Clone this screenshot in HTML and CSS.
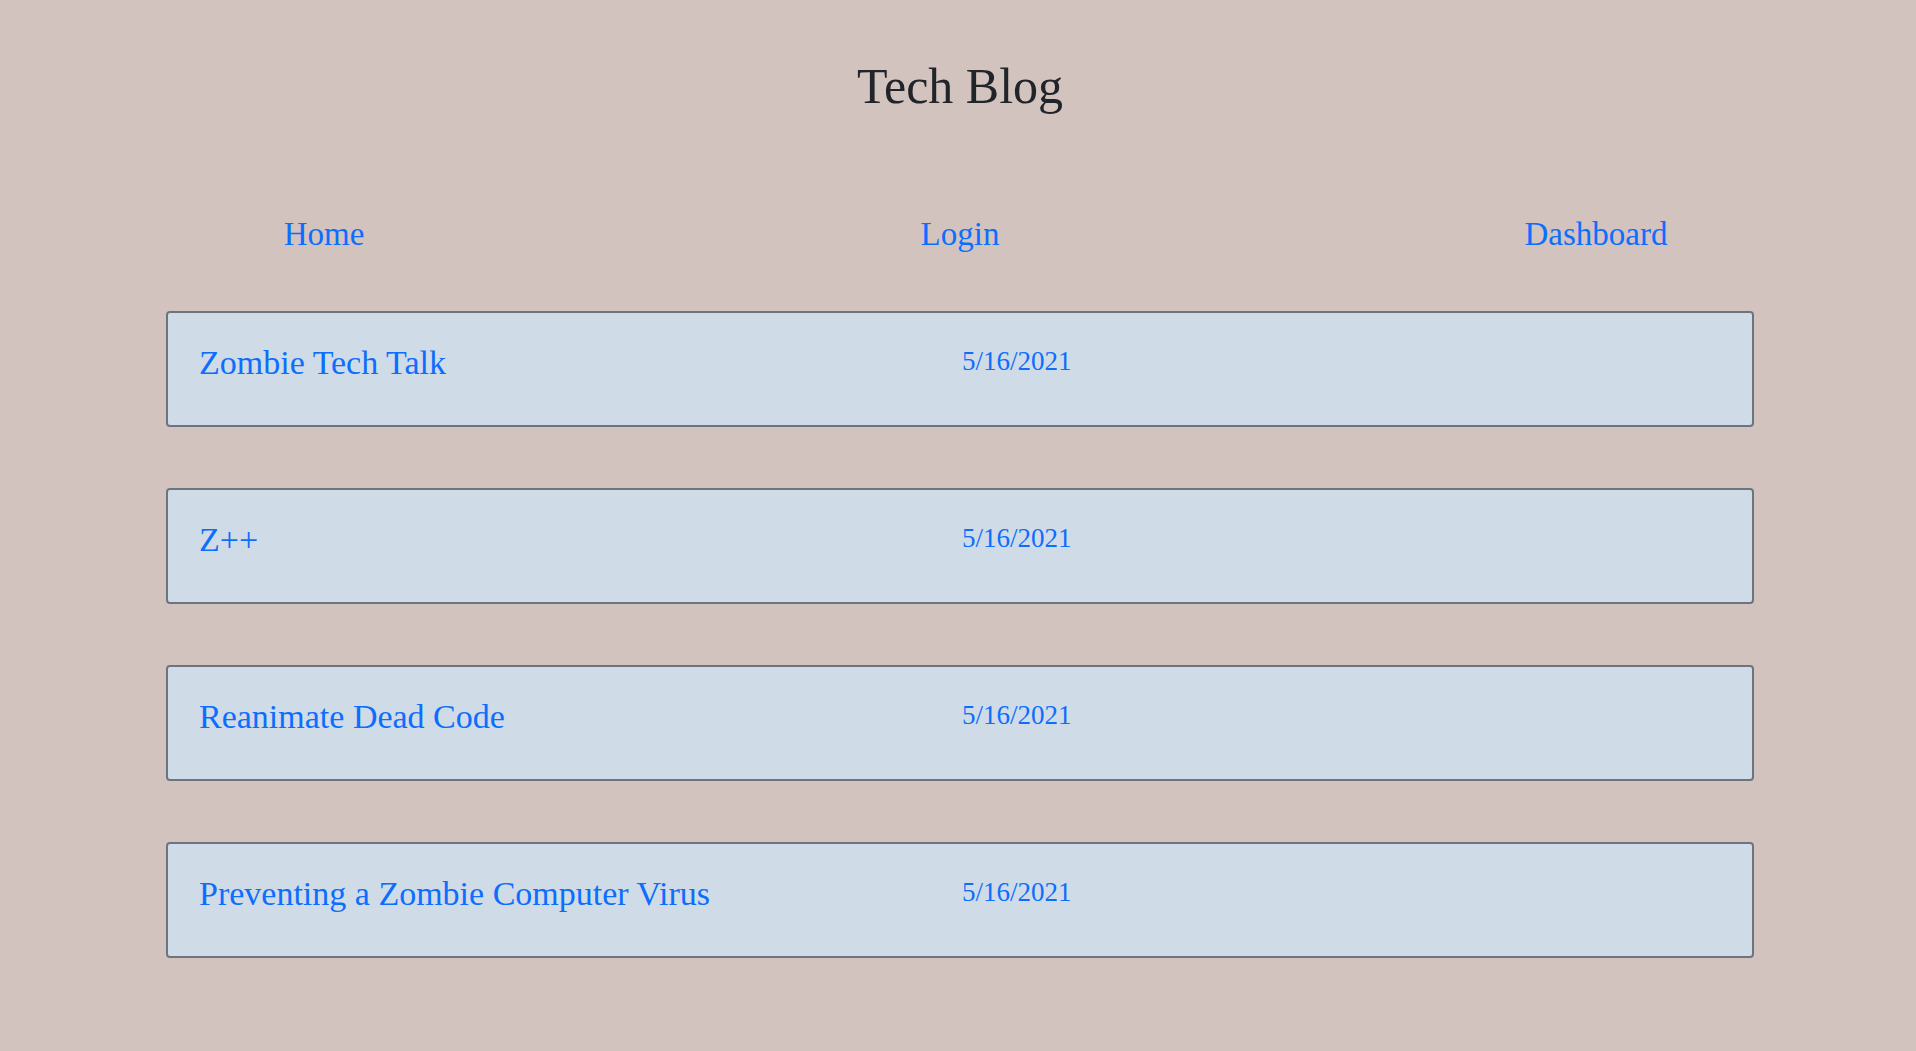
FILE: index.html
```html
<!DOCTYPE html>
<html lang="en">
<head>
<meta charset="utf-8">
<title>Tech Blog</title>
<link rel="stylesheet" href="styles.css">
</head>
<body>
<header class="site-header">
  <h1 class="site-title">Tech Blog</h1>
</header>
<nav class="site-nav">
  <a class="nav-link" href="#">Home</a>
  <a class="nav-link" href="#">Login</a>
  <a class="nav-link" href="#">Dashboard</a>
</nav>
<main class="post-list">
  <article class="post-card">
    <a class="post-title" href="#">Zombie Tech Talk</a>
    <span class="post-date">5/16/2021</span>
  </article>
  <article class="post-card">
    <a class="post-title" href="#">Z++</a>
    <span class="post-date">5/16/2021</span>
  </article>
  <article class="post-card">
    <a class="post-title" href="#">Reanimate Dead Code</a>
    <span class="post-date">5/16/2021</span>
  </article>
  <article class="post-card">
    <a class="post-title" href="#">Preventing a Zombie Computer Virus</a>
    <span class="post-date">5/16/2021</span>
  </article>
</main>
</body>
</html>
```

FILE: styles.css
```css
* { box-sizing: border-box; }

html, body {
  margin: 0;
  background: #d2c3bf;
}

body {
  padding: 0 0 0 4px;
  font-family: "Liberation Serif", "DejaVu Serif", serif;
  color: #212529;
  min-height: 1051px;
}

.site-header {
  padding-top: 56px;
  text-align: center;
}

.site-title {
  margin: 0;
  font-size: 50px;
  font-weight: 400;
  line-height: 60px;
  color: #212529;
}

.site-nav {
  margin-top: 98px;
  display: grid;
  grid-template-columns: repeat(3, 636px);
  justify-content: center;
  justify-items: center;
}

.nav-link {
  font-size: 33px;
  line-height: 40px;
  color: #0d6efd;
  text-decoration: none;
}

.post-list {
  margin: 57px 162px 0 162px;
  display: flex;
  flex-direction: column;
  gap: 61px;
}

.post-card {
  height: 116px;
  border: 2px solid #6c757d;
  border-radius: 4px;
  background: #cfdbe6;
  display: grid;
  grid-template-columns: 1fr 1fr;
  align-items: start;
  padding-top: 30px;
}

.post-title {
  padding-left: 31px;
  font-size: 34px;
  line-height: 40px;
  color: #0d6efd;
  text-decoration: none;
}

.post-date {
  padding-left: 2px;
  margin-top: -2px;
  font-size: 27px;
  line-height: 40px;
  color: #0d6efd;
}
```
